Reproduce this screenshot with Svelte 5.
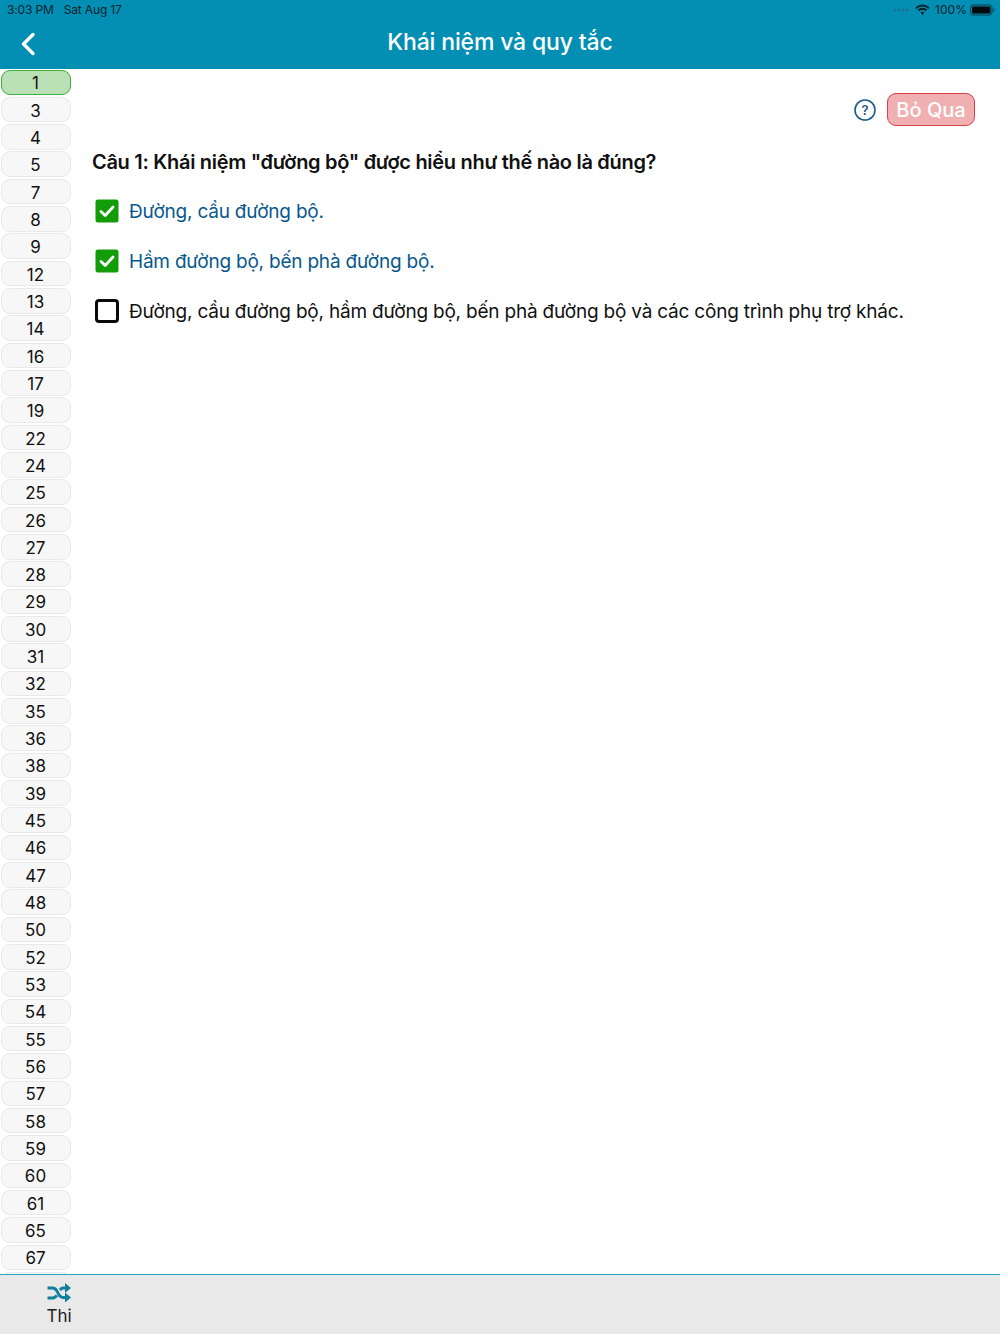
<script>
  const nums = [1,3,4,5,7,8,9,12,13,14,16,17,19,22,24,25,26,27,28,29,30,31,32,35,36,38,39,45,46,47,48,50,52,53,54,55,56,57,58,59,60,61,65,67,''];
  const answers = [
    { text: 'Đường, cầu đường bộ.', on: true },
    { text: 'Hầm đường bộ, bến phà đường bộ.', on: true },
    { text: 'Đường, cầu đường bộ, hầm đường bộ, bến phà đường bộ và các công trình phụ trợ khác.', on: false }
  ];
</script>

<div class="page">
  <header class="head">
    <div class="status">
      <div class="status-left"><span>3:03 PM</span><span>Sat Aug 17</span></div>
      <div class="status-right">
        <svg class="dots" width="16" height="3" viewBox="0 0 16 3"><g fill="#1f6f86"><rect x="0" y="0" width="2.4" height="2.4" rx="1"/><rect x="4" y="0" width="2.4" height="2.4" rx="1"/><rect x="8" y="0" width="2.4" height="2.4" rx="1"/><rect x="12" y="0" width="2.4" height="2.4" rx="1"/></g></svg>
        <svg class="wifi" width="15" height="12" viewBox="0 0 14 11"><g fill="none" stroke="#06222c" stroke-width="1.9"><path d="M1 3.8a8.6 8.6 0 0 1 12 0"/><path d="M3.2 6a5.4 5.4 0 0 1 7.6 0"/></g><path d="M5.200 7.900a2.600 2.600 0 0 1 3.600 0L7 10.400z" fill="#06222c"/></svg>
        <span class="pct">100%</span>
        <svg class="batt" width="25" height="12" viewBox="0 0 25 12"><rect x="0.5" y="1" width="21.500" height="10" rx="2.600" fill="none" stroke="#0a3a48"/><rect x="2" y="2.500" width="18.500" height="7" rx="1.300" fill="#02090c"/><path d="M23.300 4.200c1 .3 1.400 1 1.400 1.800s-.4 1.500-1.400 1.800z" fill="#0a5568"/></svg>
      </div>
    </div>
    <div class="nav">
      <svg class="back" width="16" height="24" viewBox="0 0 16 24"><path d="M13 2.500 3.500 12 13 21.500" fill="none" stroke="#fff" stroke-width="3.400" stroke-linecap="round" stroke-linejoin="round"/></svg>
      <h1>Khái niệm và quy tắc</h1>
    </div>
  </header>

  <div class="body">
    <nav class="rail">
      {#each nums as n, i}
        <div class="pill" class:active={i === 0}>{n}</div>
      {/each}
    </nav>

    <main class="content">
      <div class="tools">
        <svg width="24" height="24" viewBox="0 0 24 24"><circle cx="12" cy="12" r="10" fill="none" stroke="#1d5b8a" stroke-width="1.600"/><text x="12" y="16.500" text-anchor="middle" class="q">?</text></svg>
        <button class="skip">Bỏ Qua</button>
      </div>
      <h2>Câu 1: Khái niệm "đường bộ" được hiểu như thế nào là đúng?</h2>
      <ul>
        {#each answers as a}
          <li class:on={a.on}>
            {#if a.on}
              <svg width="24" height="24" viewBox="0 0 24 24"><rect x="0.500" y="0.500" width="23" height="23" rx="2.500" fill="#129c08"/><path d="M6 12.500l4.200 4L18 8" fill="none" stroke="#fff" stroke-width="2.800" stroke-linecap="round" stroke-linejoin="round"/></svg>
            {:else}
              <svg width="24" height="24" viewBox="0 0 24 24"><rect x="1.500" y="1.500" width="21" height="21" rx="2.600" fill="#fff" stroke="#0a0a0a" stroke-width="3"/></svg>
            {/if}
            <span>{a.text}</span>
          </li>
        {/each}
      </ul>
    </main>
  </div>

  <footer class="foot">
    <div class="tab">
      <svg width="24" height="20" viewBox="0 0 24 20"><g fill="none" stroke="#0f7f9c" stroke-width="3"><path d="M0.500 5h5c2.500 0 3.700 1.200 5.200 4.500s2.800 5 5.300 5h3"/><path d="M0.500 15h5c2.100 0 3.300-1 4.300-2.700M13 7c1-1.300 2-1.900 3.500-1.900h3"/></g><path d="M18 0 24 5l-6 5zM18 9.500l6 5-6 5z" fill="#0f7f9c"/></svg>
      <span>Thi</span>
    </div>
  </footer>
</div>

<style>
  :global(body) { margin: 0; background: #fff; }
  .page {
    width: 1000px; height: 1334px;
    display: flex; flex-direction: column;
    font-family: Inter, "Noto Sans", sans-serif;
    overflow: hidden;
  }
  .head { height: 69px; flex: none; background: #028fb3; display: flex; flex-direction: column; }
  .status {
    height: 19px; flex: none; padding: 0 5px 0 7px;
    display: flex; justify-content: space-between; align-items: center;
    font-size: 12px; color: #06222c; letter-spacing: -0.15px;
  }
  .status-left { display: flex; gap: 10px; }
  .status-right { display: flex; align-items: center; letter-spacing: 0.05px; }
  .dots { margin-right: 5px; margin-top: 2px; }
  .wifi { margin-right: 5px; }
  .pct { margin-right: 3px; }
  .nav { flex: 1; display: flex; align-items: center; justify-content: center; position: relative; padding-bottom: 4px; }
  .back { position: absolute; left: 20px; top: 13px; }
  h1 { margin: 0; font-size: 23px; font-weight: 500; color: #fff; letter-spacing: -0.15px; }

  .body { flex: 1; display: flex; min-height: 0; overflow: hidden; }
  .rail { width: 71px; flex: none; padding: 0.5px 0 0 0.5px; box-sizing: border-box; display: flex; flex-direction: column; gap: 1.84px; }
  .pill {
    flex: none; width: 70px; height: 25.5px; box-sizing: border-box;
    border: 1px solid #e9e9e9; border-radius: 9px; background: #f7f7f7;
    display: flex; align-items: center; justify-content: center;
    font-size: 17px; line-height: 22px; color: #111; padding-top: 2px;
  }
  .pill.active { background: #b9e1b5; border-color: #3fae3a; border-width: 1.5px; }

  .content { flex: 1; padding: 24px 25px 0 21px; min-width: 0; }
  .tools { display: flex; justify-content: flex-end; align-items: center; gap: 10px; }
  .q { font: 600 13px Inter, sans-serif; fill: #1d5b8a; }
  .skip {
    width: 88px; height: 33px; padding: 0;
    background: #f0b0b2; border: 1.5px solid #dc3f48; border-radius: 9px;
    color: #fff; font: 500 20px Inter, sans-serif;
  }
  h2 { margin: 22px 0 0; font-size: 20px; line-height: 28px; font-weight: 600; color: #111; letter-spacing: -0.3px; }
  ul { list-style: none; margin: 10px 0 0; padding: 0; display: flex; flex-direction: column; }
  li {
    height: 50px; display: flex; align-items: center; gap: 10px;
    padding-left: 3px; font-size: 19px; color: #111; letter-spacing: -0.21px;
  }
  li.on { color: #07588c; }
  li svg { flex: none; }

  .foot {
    height: 60px; flex: none; box-sizing: border-box;
    background: #e9e9e9; border-top: 1px solid #1fa6c9;
    display: flex;
  }
  .tab { width: 118px; display: flex; flex-direction: column; align-items: center; padding-top: 8px; font-size: 17px; color: #222; }
  .tab span { line-height: 22px; margin-top: 2px; }
</style>
